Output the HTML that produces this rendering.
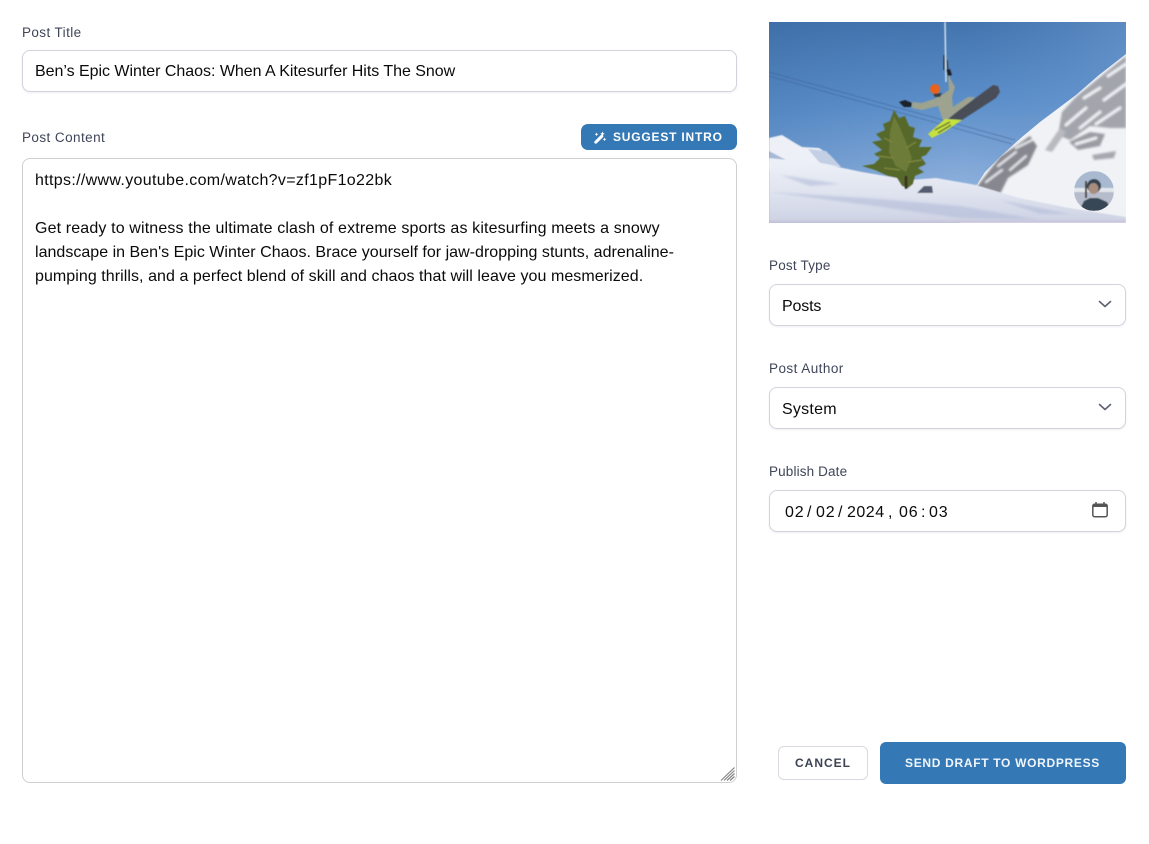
<!DOCTYPE html>
<html><head><meta charset="utf-8"><style>
html,body{margin:0;padding:0;background:#fff;width:1149px;height:844px;overflow:hidden}
body{position:relative;font-family:"Liberation Sans",sans-serif;color:#000}
div{position:absolute;white-space:nowrap;box-sizing:border-box}
.l{font-size:13.5px;color:#3f4658;line-height:18px}
.b{background:#fff;border:1px solid #d2d3dc;border-radius:8px;box-shadow:0 1px 2px rgba(40,50,90,.08)}
.t{font-size:16px;line-height:24px;letter-spacing:.1px;color:#0a0a0a}
</style></head><body>
<div class="l" style="left:22px;top:24px;letter-spacing:.4px">Post Title</div>
<div class="b" style="left:22px;top:50px;width:715px;height:42px"></div>
<div class="t" style="left:35px;top:60px;letter-spacing:-.03px">Ben’s Epic Winter Chaos: When A Kitesurfer Hits The Snow</div>
<div class="l" style="left:22px;top:129px;letter-spacing:.43px">Post Content</div>
<div style="left:581px;top:124px;width:156px;height:26px;background:#3478b5;border-radius:7px"></div>
<svg style="position:absolute;left:593px;top:130px" width="15" height="15" viewBox="0 0 15 15"><path d="M2.800 12.200L8.800 6.200" stroke="#fff" stroke-width="3" stroke-linecap="round"/><path d="M9.500 1.500l.7 1.600 1.600.7-1.600.7-.7 1.600-.7-1.600-1.600-.7 1.600-.7zM3.500 2.500l.6 1.200 1.200.6-1.200.6-.6 1.200-.6-1.200-1.200-.6 1.200-.6zM11.500 7.500l.6 1.200 1.200.6-1.200.6-.6 1.200-.6-1.200-1.200-.6 1.200-.6z" fill="#fff"/></svg>
<div style="left:613px;top:129px;font-size:12px;line-height:16px;font-weight:700;letter-spacing:.8px;color:#fff">SUGGEST INTRO</div>
<div style="left:22px;top:158px;width:715px;height:625px;background:#fff;border:1px solid #cfcfd4;border-radius:8px"></div>
<div class="t" style="left:35px;top:169px;letter-spacing:.33px">https://www.youtube.com/watch?v=zf1pF1o22bk</div>
<div class="t" style="left:35px;top:217px;letter-spacing:.14px">Get ready to witness the ultimate clash of extreme sports as kitesurfing meets a snowy</div>
<div class="t" style="left:35px;top:241px;letter-spacing:.02px">landscape in Ben's Epic Winter Chaos. Brace yourself for jaw-dropping stunts, adrenaline-</div>
<div class="t" style="left:35px;top:265px;letter-spacing:.06px">pumping thrills, and a perfect blend of skill and chaos that will leave you mesmerized.</div>
<svg style="position:absolute;left:720px;top:766px" width="16" height="16" viewBox="0 0 16 16"><path d="M1 14.500L14.500 1.500M4 14.500L14.500 4.500M7 14.500L14.500 7.500M10 14.500L14.500 10.500" stroke="#858585" stroke-width="1.200"/></svg>

<svg style="position:absolute;left:769px;top:22px" width="357" height="201" viewBox="769 22 357 201" preserveAspectRatio="none">
<defs>
<linearGradient id="sky" x1="0" y1="0" x2="0.1" y2="1"><stop offset="0" stop-color="#3f70aa"/><stop offset=".45" stop-color="#5c8fca"/><stop offset=".8" stop-color="#86abd9"/><stop offset="1" stop-color="#98b9e0"/></linearGradient>
<linearGradient id="sky2" x1="0" y1="0" x2="1" y2="0"><stop offset="0" stop-color="#3a6aa3" stop-opacity=".2"/><stop offset=".55" stop-color="#5b8ac2" stop-opacity="0"/><stop offset="1" stop-color="#6f9bd0" stop-opacity=".55"/></linearGradient>
<linearGradient id="snow" x1="0" y1="0" x2="0" y2="1"><stop offset="0" stop-color="#eef1f8"/><stop offset=".55" stop-color="#dfe3ef"/><stop offset="1" stop-color="#cdd2e3"/></linearGradient>
<filter id="bl"><feGaussianBlur stdDeviation=".45"/></filter>
<filter id="bl2"><feGaussianBlur stdDeviation="1.100"/></filter>
<clipPath id="mt"><path d="M976 186L985 172L1002 155L1022 137L1040 122L1076 95L1099 75L1126 54V223H960Z"/></clipPath>
<clipPath id="av"><circle cx="1094" cy="191" r="20"/></clipPath>
</defs>
<rect x="769" y="22" width="357" height="201" fill="url(#sky)"/>
<rect x="769" y="22" width="357" height="201" fill="url(#sky2)"/>
<g filter="url(#bl)">
<path d="M769 72L1015 140M769 76L1012 144" stroke="#3d5f95" stroke-width=".5" fill="none"/>
<path d="M769 138L782 135L795 143L802 147L819 148L830 155L841 167L769 170Z" fill="#edf0f6"/>
<path d="M769 151L786 160L769 162Z" fill="#a7b8d6"/>
<path d="M808 149L826 151L841 167L820 163Z" fill="#c3cfe4"/>
</g>
<g clip-path="url(#mt)">
<rect x="960" y="50" width="170" height="175" fill="#f0f2f6"/>
<g filter="url(#bl2)">
<path d="M976 188L1000 157L1030 136L1037 146L1028 165L1008 178L1000 194Z" fill="#87888f"/>
<path d="M1062 112L1076 97L1099 78L1126 56V128L1110 128L1090 126L1070 140L1058 135Z" fill="#a3a5ac"/>
<path d="M1069 142L1090 132L1105 134L1100 146L1078 150Z" fill="#9a9ca3"/>
<path d="M1092 155L1116 151L1114 158L1094 160Z" fill="#a6a8af"/>
<path d="M1045 150L1060 128L1066 132L1052 152Z" fill="#b8bac0"/>
<g fill="none" stroke="#f2f3f7" stroke-linecap="round">
<path d="M986 182L1002 170M998 166L1016 152M1010 170L1026 156M1016 148L1032 140" stroke-width="2"/>
<path d="M1066 125L1086 108M1080 128L1100 112M1096 124L1120 108M1084 98L1100 88M1104 100L1126 84M1108 76L1126 64M1076 144L1096 138" stroke-width="3"/>
</g>
</g>
</g>
<g filter="url(#bl)">
<path d="M769 158L819 163L862 172L909 180L936 178L976 185L1019 198L1069 208L1126 217V223H769Z" fill="url(#snow)"/>
<g filter="url(#bl2)"><path d="M769 192L860 204L960 218L1040 220L960 206L880 199ZM1000 200L1070 214L1040 214ZM780 175L840 184L810 186Z" fill="#b2bdd8" opacity=".6"/></g>
<path d="M769 220H1126V223H769Z" fill="#cbc8dd"/>
<path d="M894 110L899 118L905 116L909 126L915 128L913 137L922 140L919 147L932 147L926 155L921 157L926 164L918 168L924 172L915 176L913 184L908 188L902 186L897 178L888 176L875 170L862 166L874 164L880 158L874 154L882 150L872 142L882 140L876 134L885 130L883 124L890 121Z" fill="#56692c"/>
<path d="M894 116L900 128L906 142L912 158L906 172L896 166L889 152L890 132Z" fill="#6d7c38"/>
<path d="M884 138L892 142M916 142L906 148M878 156L894 158M922 160L908 162M884 168L900 170" stroke="#83893f" stroke-width="1.200"/>
<path d="M906 189V176" stroke="#3d3520" stroke-width="3"/>
<path d="M917 193L924 186L932 186L933 193L925 193Z" fill="#565d70"/>
<path d="M945 22L946 82" stroke="#d0deea" stroke-width="1.500"/>
<path d="M944 55L944 70M947 60L948 72" stroke="#23252e" stroke-width="1.200"/>
<path d="M948 73L951 80L955 87L952 97L953 107L968 97L975 97L968 105L958 115L948 120L943 120L938 106L922 110L912 108L912 102L922 103L934 99L942 95L949 90Z" fill="#9ea390"/>
<path d="M946 70L950 69L952 75L948 76Z" fill="#1e2129"/>
<path d="M899 102L905 100L912 103L911 107L904 107Z" fill="#1d2029"/>
<circle cx="935" cy="89" r="5" fill="#e8621f"/>
<path d="M933 94L942 93L940 97L935 97Z" fill="#3a3a40"/>
<path d="M993 85L998 86L1000 92L996 98L962 120L948 119L958 111Z" fill="#4a4d58"/>
<path d="M945 119L962 120L944 132L932 138L928 134Z" fill="#c8e23c"/>
<path d="M935 130L950 122M938 133L951 125" stroke="#66723a" stroke-width="1.500"/>
</g>
<g clip-path="url(#av)" filter="url(#bl)">
<rect x="1074" y="171" width="40" height="40" fill="#a9b9d0"/>
<rect x="1074" y="188" width="40" height="4" fill="#e4e8ee"/>
<rect x="1074" y="192" width="40" height="20" fill="#b6bccb"/>
<path d="M1079 211L1084 201L1090 198L1098 198L1107 202L1112 211Z" fill="#384754"/>
<circle cx="1094" cy="186" r="7" fill="#36434f"/>
<ellipse cx="1093.500" cy="188.500" rx="5" ry="5.500" fill="#a98d7b"/>
<path d="M1086 181L1086 198" stroke="#4a423c" stroke-width="2"/>
</g>
</svg>

<div class="l" style="left:769px;top:257px;letter-spacing:.2px">Post Type</div>
<div class="b" style="left:769px;top:284px;width:357px;height:42px"></div>
<div class="t" style="left:782px;top:295px;letter-spacing:-.16px">Posts</div>
<svg style="position:absolute;left:1096px;top:298px" width="18" height="14" viewBox="0 0 18 14"><path d="M3.500 3.500L9 8.500L14.500 3.500" stroke="#5c6270" stroke-width="1.600" fill="none" stroke-linecap="round" stroke-linejoin="round"/></svg>
<div class="l" style="left:769px;top:360px;letter-spacing:.45px">Post Author</div>
<div class="b" style="left:769px;top:387px;width:357px;height:42px"></div>
<div class="t" style="left:782px;top:398px;letter-spacing:.24px">System</div>
<svg style="position:absolute;left:1096px;top:401px" width="18" height="14" viewBox="0 0 18 14"><path d="M3.500 3.500L9 8.500L14.500 3.500" stroke="#5c6270" stroke-width="1.600" fill="none" stroke-linecap="round" stroke-linejoin="round"/></svg>
<div class="l" style="left:769px;top:463px;letter-spacing:.14px">Publish Date</div>
<div class="b" style="left:769px;top:490px;width:357px;height:42px"></div>
<div class="t" style="left:785px;top:501px;letter-spacing:.8px">02</div><div class="t" style="left:807px;top:501px">/</div>
<div class="t" style="left:816px;top:501px;letter-spacing:.8px">02</div><div class="t" style="left:838px;top:501px">/</div>
<div class="t" style="left:847px;top:501px;letter-spacing:.5px">2024</div><div class="t" style="left:888px;top:501px">,</div>
<div class="t" style="left:899px;top:501px;letter-spacing:.8px">06</div><div class="t" style="left:921px;top:501px">:</div>
<div class="t" style="left:929px;top:501px;letter-spacing:.8px">03</div>
<svg style="position:absolute;left:1091px;top:501px" width="18" height="18" viewBox="0 0 18 18"><rect x="1.800" y="3.200" width="14.400" height="12.600" rx="1.800" fill="none" stroke="#555" stroke-width="1.500"/><rect x="1.800" y="3.200" width="14.400" height="2.800" fill="#555"/><path d="M5 1v3M13 1v3" stroke="#555" stroke-width="1.500"/></svg>
<div style="left:778px;top:746px;width:90px;height:34px;background:#fff;border:1px solid #d9d9e2;border-radius:6px"></div>
<div style="left:795px;top:755px;font-size:12px;line-height:16px;font-weight:700;letter-spacing:1px;color:#3c4354">CANCEL</div>
<div style="left:880px;top:742px;width:246px;height:42px;background:#3478b5;border-radius:6px"></div>
<div style="left:905px;top:755px;font-size:12px;line-height:16px;font-weight:700;letter-spacing:.69px;color:#f0f5fb">SEND DRAFT TO WORDPRESS</div>
</body></html>
